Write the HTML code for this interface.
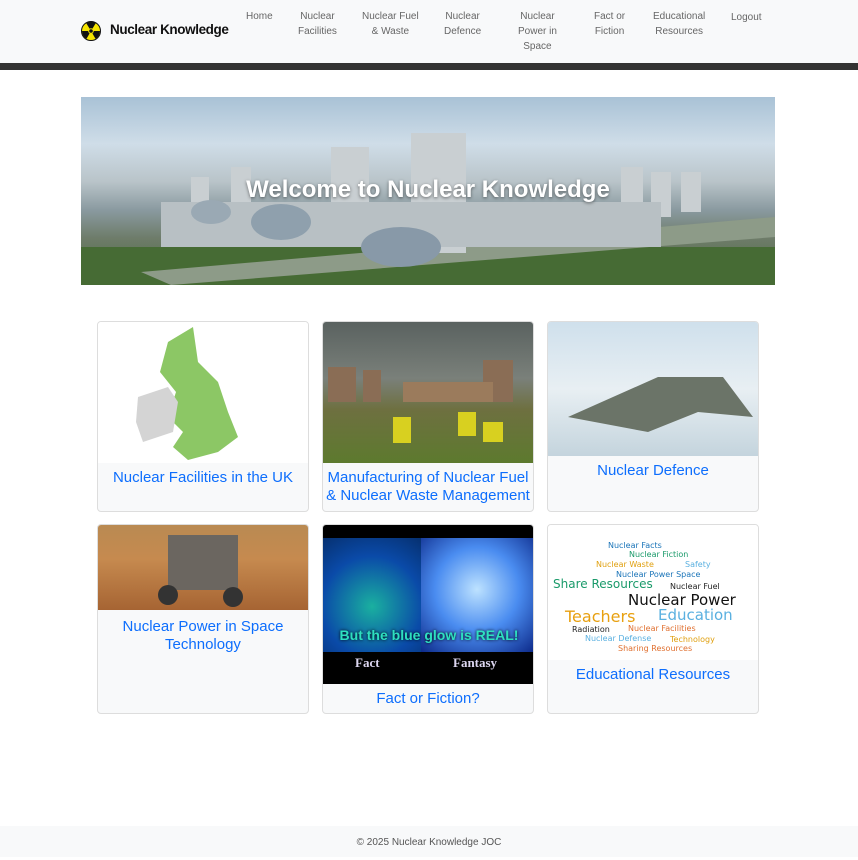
<!DOCTYPE html>
<html><head><meta charset="utf-8"><style>
*{box-sizing:border-box;margin:0;padding:0}
body{width:858px;height:857px;background:#fff;font-family:"Liberation Sans","DejaVu Sans",sans-serif;position:relative;overflow:hidden}
.nav{position:absolute;left:0;top:0;width:858px;height:63px;background:#f8f9fa}
.band{position:absolute;left:0;top:63px;width:858px;height:7px;background:#333}
.brand{position:absolute;left:110px;top:22px;font-size:13.5px;font-weight:bold;color:#111;font-family:"Liberation Sans",sans-serif;letter-spacing:-0.4px}
.logo{position:absolute;left:81px;top:21px}
.nl{position:absolute;top:9px;font-size:10px;line-height:15px;color:#666;text-align:center}
.hero{position:absolute;left:81px;top:97px;width:694px;height:188px;overflow:hidden;
background:linear-gradient(180deg,#a9c2d6 0%,#cfdde8 25%,#b9c4c9 45%,#8a9aa0 60%,#6e7c6a 75%,#4d6a3c 100%)}
.hero h1{position:absolute;left:0;right:0;top:79px;text-align:center;color:#fff;font-size:24px;font-weight:bold;text-shadow:0 1px 3px rgba(0,0,0,.5)}
.card{position:absolute;width:212px;background:#f8f9fa;border:1px solid #ddd;border-radius:4px;overflow:hidden}
.img{position:absolute;left:0;top:0;width:100%}
.t{position:absolute;left:0;right:0;text-align:center;color:#0d6efd;font-size:15px;line-height:18px}
.foot{position:absolute;left:0;top:826px;width:858px;height:31px;background:#f8f9fa;text-align:center;font-size:10px;color:#555;line-height:34px}
.wc{position:absolute;white-space:nowrap;font-family:"DejaVu Sans",sans-serif}
</style></head><body>
<div class="nav"></div><div class="band"></div>
<svg class="logo" width="20" height="20" viewBox="0 0 20 20"><circle cx="10" cy="10" r="9.5" fill="#f5e400" stroke="#111"/>
<path d="M10 10 L5 1.8 A9 9 0 0 1 15 1.8Z M10 10 L19 10 A9 9 0 0 1 14.5 17.8Z M10 10 L5.5 17.8 A9 9 0 0 1 1 10Z" fill="#111"/><circle cx="10" cy="10" r="2.8" fill="#f5e400"/><circle cx="10" cy="10" r="1.8" fill="#111"/></svg>
<div class="brand">Nuclear Knowledge</div>
<div class="nl" style="left:246px">Home</div>
<div class="nl" style="left:298px">Nuclear<br>Facilities</div>
<div class="nl" style="left:362px">Nuclear Fuel<br>&amp; Waste</div>
<div class="nl" style="left:444px">Nuclear<br>Defence</div>
<div class="nl" style="left:518px">Nuclear<br>Power in<br>Space</div>
<div class="nl" style="left:594px">Fact or<br>Fiction</div>
<div class="nl" style="left:653px">Educational<br>Resources</div>
<div class="nl" style="left:731px;top:10px">Logout</div>

<div class="hero">
<svg width="694" height="188" style="position:absolute;left:0;top:0">
<rect x="0" y="150" width="694" height="38" fill="#466b34"/>
<path d="M60 175 L694 120 L694 140 L90 188Z" fill="#8d9b88"/>
<g fill="#c9cfd2"><rect x="150" y="70" width="20" height="40"/><rect x="250" y="50" width="38" height="80"/><rect x="330" y="36" width="55" height="120"/><rect x="540" y="70" width="22" height="50"/><rect x="570" y="75" width="20" height="45"/><rect x="600" y="75" width="20" height="40"/><rect x="110" y="80" width="18" height="30"/></g>
<rect x="80" y="105" width="500" height="45" fill="#b8c0c4"/>
<ellipse cx="200" cy="125" rx="30" ry="18" fill="#8fa0ad"/><ellipse cx="320" cy="150" rx="40" ry="20" fill="#8899a8"/><ellipse cx="130" cy="115" rx="20" ry="12" fill="#9aa9b4"/>
</svg>
<h1>Welcome to Nuclear Knowledge</h1></div>

<div class="card" style="left:97px;top:321px;height:191px">
<div class="img" style="height:141px;background:#fff">
<svg width="212" height="141"><path d="M70 20 L95 5 L100 40 L120 60 L130 90 L140 115 L120 130 L90 138 L75 125 L85 110 L70 95 L78 70 L62 50Z" fill="#8cc765"/><path d="M40 75 L70 65 L80 80 L75 110 L45 120 L38 100Z" fill="#d4d4d4"/></svg></div>
<div class="t" style="top:147px">Nuclear Facilities in the UK</div></div>

<div class="card" style="left:322px;top:321px;height:191px">
<div class="img" style="height:141px;background:linear-gradient(180deg,#5a6260 0%,#7a807a 40%,#6e7040 62%,#5d7a2e 100%)">
<svg width="212" height="141"><g fill="#8a6d55"><rect x="5" y="45" width="28" height="35"/><rect x="40" y="48" width="18" height="32"/><rect x="160" y="38" width="30" height="42"/></g><rect x="80" y="60" width="90" height="20" fill="#9b7b5c"/><g fill="#d8d020"><rect x="70" y="95" width="18" height="26"/><rect x="135" y="90" width="18" height="24"/><rect x="160" y="100" width="20" height="20"/></g></svg></div>
<div class="t" style="top:147px">Manufacturing of Nuclear Fuel<br>&amp; Nuclear Waste Management</div></div>

<div class="card" style="left:547px;top:321px;height:191px">
<div class="img" style="height:134px;background:linear-gradient(180deg,#cfe0ec,#e8eff3 50%,#c4d4dd)">
<svg width="212" height="134"><path d="M20 95 L110 55 L175 55 L205 95 L150 90 L100 110Z" fill="#6b7468"/></svg></div>
<div class="t" style="top:140px">Nuclear Defence</div></div>

<div class="card" style="left:97px;top:524px;height:190px">
<div class="img" style="height:85px;background:linear-gradient(180deg,#b98a52,#c68a4f 40%,#a66433)">
<svg width="212" height="85"><rect x="70" y="10" width="70" height="55" fill="#6b6660"/><circle cx="70" cy="70" r="10" fill="#333"/><circle cx="135" cy="72" r="10" fill="#333"/></svg></div>
<div class="t" style="top:93px">Nuclear Power in Space<br>Technology</div></div>

<div class="card" style="left:322px;top:524px;height:190px">
<div class="img" style="height:159px;background:#000">
<div style="position:absolute;left:0;top:13px;width:98px;height:114px;background:radial-gradient(circle at 50% 60%,#1ab0a0,#0a4aa8 60%,#063070)"></div>
<div style="position:absolute;left:98px;top:13px;width:112px;height:114px;background:radial-gradient(circle at 50% 45%,#bde2ff,#4a8cf0 50%,#0d2a8a)"></div>
<div style="position:absolute;left:0;top:102px;width:212px;text-align:center;color:#2ee0c0;font-weight:bold;font-size:14px;text-shadow:0 0 3px #000">But the blue glow is REAL!</div>
<div style="position:absolute;left:32px;top:130px;color:#dcd6f0;font-family:'Liberation Serif',serif;font-weight:bold;font-size:13px">Fact</div>
<div style="position:absolute;left:130px;top:130px;color:#dcd6f0;font-family:'Liberation Serif',serif;font-weight:bold;font-size:13px">Fantasy</div></div>
<div class="t" style="top:165px">Fact or Fiction?</div></div>

<div class="card" style="left:547px;top:524px;height:190px">
<div class="img" style="height:135px;background:#fff">
<span class="wc" style="left:60px;top:16px;font-size:8px;color:#1a74b8">Nuclear Facts</span>
<span class="wc" style="left:81px;top:25px;font-size:8px;color:#1a9a6a">Nuclear Fiction</span>
<span class="wc" style="left:48px;top:35px;font-size:8px;color:#e0a010">Nuclear Waste</span>
<span class="wc" style="left:137px;top:35px;font-size:8px;color:#5ab0e0">Safety</span>
<span class="wc" style="left:68px;top:45px;font-size:8px;color:#1a74b8">Nuclear Power Space</span>
<span class="wc" style="left:5px;top:52px;font-size:12px;color:#1a9a6a">Share Resources</span>
<span class="wc" style="left:122px;top:57px;font-size:8px;color:#222">Nuclear Fuel</span>
<span class="wc" style="left:80px;top:66px;font-size:15px;color:#111">Nuclear Power</span>
<span class="wc" style="left:17px;top:82px;font-size:16px;color:#e8a010">Teachers</span>
<span class="wc" style="left:110px;top:81px;font-size:15px;color:#5ab0e0">Education</span>
<span class="wc" style="left:24px;top:100px;font-size:8px;color:#222">Radiation</span>
<span class="wc" style="left:80px;top:99px;font-size:8px;color:#e07030">Nuclear Facilities</span>
<span class="wc" style="left:37px;top:109px;font-size:8px;color:#5ab0e0">Nuclear Defense</span>
<span class="wc" style="left:122px;top:110px;font-size:8px;color:#e0a010">Technology</span>
<span class="wc" style="left:70px;top:119px;font-size:8px;color:#e07030">Sharing Resources</span>
</div>
<div class="t" style="top:141px">Educational Resources</div></div>

<div class="foot">© 2025 Nuclear Knowledge JOC</div>
</body></html>
